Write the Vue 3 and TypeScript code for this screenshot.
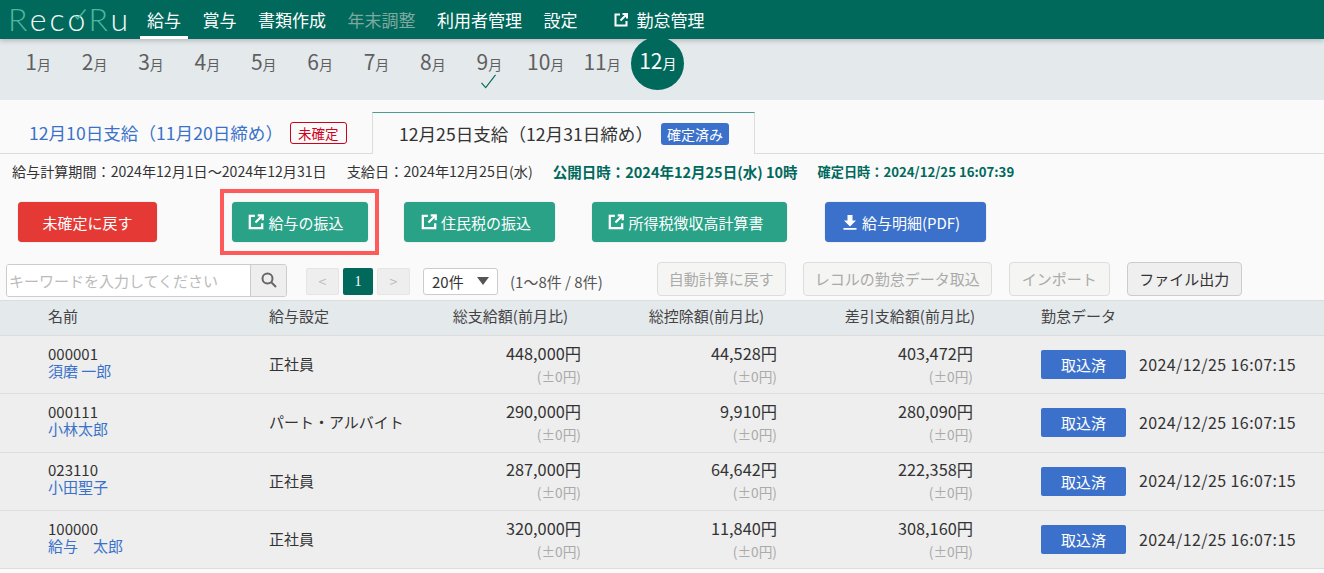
<script setup lang="ts">
interface Employee {
  code: string
  name: string
  type: string
  total: string
  deduct: string
  net: string
}

const navItems = [
  { label: '給与', active: true },
  { label: '賞与' },
  { label: '書類作成' },
  { label: '年末調整', disabled: true },
  { label: '利用者管理' },
  { label: '設定' },
]

const months = [1, 2, 3, 4, 5, 6, 7, 8, 9, 10, 11, 12]

const employees: Employee[] = [
  { code: '000001', name: '須磨 一郎', type: '正社員', total: '448,000', deduct: '44,528', net: '403,472' },
  { code: '000111', name: '小林太郎', type: 'パート・アルバイト', total: '290,000', deduct: '9,910', net: '280,090' },
  { code: '023110', name: '小田聖子', type: '正社員', total: '287,000', deduct: '64,642', net: '222,358' },
  { code: '100000', name: '給与　太郎', type: '正社員', total: '320,000', deduct: '11,840', net: '308,160' },
]
</script>

<template>
  <div class="page">
    <!-- header -->
    <header class="topbar">
      <div class="logo">
        <span class="logo_r">R</span>ec<span class="logo_o">o<svg class="logo_check" viewBox="0 0 18 18"><path d="M2 10L6 14L16 2" /></svg></span><span class="logo_r">R</span>u
      </div>
      <nav class="nav">
        <a
          v-for="item in navItems"
          :key="item.label"
          class="nav_item"
          :class="{ active: item.active, disabled: item.disabled }"
        >{{ item.label }}</a>
      </nav>
      <a class="nav_item nav_ext">
        <svg class="ext_icon" viewBox="0 0 16 16">
          <path d="M7 2.500H2.500v11h11V9M9.500 2h4.500v4.500M14 2L7.500 8.500" />
        </svg>
        勤怠管理
      </a>
    </header>

    <!-- months -->
    <div class="months">
      <div v-for="m in months" :key="m" class="month" :class="{ current: m === 12 }">
        <span class="month_label"><b>{{ m }}</b><small>月</small></span>
        <svg v-if="m === 9" class="check" viewBox="0 0 18 16">
          <path d="M1.500 9.500L6 14.500L16.500 1" />
        </svg>
      </div>
    </div>

    <!-- tabs -->
    <div class="tabs">
      <div class="tab">
        <a class="tab_link">12月10日支給（11月20日締め）</a>
        <span class="badge_red">未確定</span>
      </div>
      <div class="tab tab_active">
        <span>12月25日支給（12月31日締め）</span>
        <span class="badge_blue">確定済み</span>
      </div>
    </div>

    <div class="period">
      <span class="calc_term">給与計算期間：2024年12月1日〜2024年12月31日</span>
      <span class="pay_day">支給日：2024年12月25日(水)</span>
      <b class="open_at">公開日時：2024年12月25日(水) 10時</b>
      <b class="fixed_at">確定日時：2024/12/25 16:07:39</b>
    </div>

    <!-- actions -->
    <div class="actions">
      <button class="btn btn_red btn_undo">未確定に戻す</button>
      <div class="highlight">
        <button class="btn btn_green btn_pay">
          <svg class="ext_icon" viewBox="0 0 16 16">
            <path d="M7 2.500H2.500v11h11V9M9.500 2h4.500v4.500M14 2L7.500 8.500" />
          </svg>
          給与の振込
        </button>
      </div>
      <button class="btn btn_green btn_tax">
        <svg class="ext_icon" viewBox="0 0 16 16">
          <path d="M7 2.500H2.500v11h11V9M9.500 2h4.500v4.500M14 2L7.500 8.500" />
        </svg>
        住民税の振込
      </button>
      <button class="btn btn_green btn_slip">
        <svg class="ext_icon" viewBox="0 0 16 16">
          <path d="M7 2.500H2.500v11h11V9M9.500 2h4.500v4.500M14 2L7.500 8.500" />
        </svg>
        所得税徴収高計算書
      </button>
      <button class="btn btn_blue btn_pdf">
        <svg class="dl_icon" viewBox="0 0 14 16">
          <path d="M4.500 1h5v5.500H13L7 12.500L1 6.500h3.500zM0.500 14h13v1.800H0.500z" />
        </svg>
        給与明細(PDF)
      </button>
    </div>

    <!-- toolbar -->
    <div class="toolbar">
      <div class="search">
        <input class="search_input" type="text" placeholder="キーワードを入力してください" />
        <span class="search_btn">
          <svg viewBox="0 0 18 18" width="18" height="18">
            <circle cx="7.500" cy="7.500" r="5" />
            <path d="M11.500 11.500L16 16" />
          </svg>
        </span>
      </div>
      <div class="pager">
        <span class="page_btn">&lt;</span>
        <span class="page_btn page_now">1</span>
        <span class="page_btn">&gt;</span>
      </div>
      <div class="per_page">20件<i class="caret"></i></div>
      <span class="count">(1〜8件 / 8件)</span>
      <div class="tools">
        <button class="tool tool_off tool_auto">自動計算に戻す</button>
        <button class="tool tool_off tool_import">レコルの勤怠データ取込</button>
        <button class="tool tool_off tool_in">インポート</button>
        <button class="tool tool_out">ファイル出力</button>
      </div>
    </div>

    <!-- table -->
    <div class="table">
      <div class="row row_head">
        <div class="c_name">名前</div>
        <div class="c_type">給与設定</div>
        <div class="c_num">総支給額(前月比)</div>
        <div class="c_num">総控除額(前月比)</div>
        <div class="c_num c_net">差引支給額(前月比)</div>
        <div class="c_att">勤怠データ</div>
      </div>
      <div v-for="e in employees" :key="e.code" class="row">
        <div class="c_name">
          <div class="code">{{ e.code }}</div>
          <a class="emp_name">{{ e.name }}</a>
        </div>
        <div class="c_type">{{ e.type }}</div>
        <div class="c_val">
          <div class="amount">{{ e.total }}円</div>
          <div class="diff">(±0円)</div>
        </div>
        <div class="c_val">
          <div class="amount">{{ e.deduct }}円</div>
          <div class="diff">(±0円)</div>
        </div>
        <div class="c_val c_net">
          <div class="amount">{{ e.net }}円</div>
          <div class="diff">(±0円)</div>
        </div>
        <div class="c_att">
          <button class="btn_done">取込済</button>
          <span class="stamp">2024/12/25 16:07:15</span>
        </div>
      </div>
    </div>
  </div>
</template>

<style>
html,
body {
  margin: 0;
  background: #fafafa;
}
</style>

<style scoped>
.page {
  width: 1324px;
  height: 573px;
  overflow: hidden;
  background: #fafafa;
  color: #333;
  font-family: "Noto Sans CJK JP", "Noto Sans", sans-serif;
  font-size: 15px;
}

/* header */
.topbar {
  position: relative;
  z-index: 1;
  display: flex;
  align-items: stretch;
  height: 39px;
  padding-left: 8px;
  background: #00695c;
  box-shadow: 0 2px 5px rgba(0, 0, 0, 0.2);
  box-sizing: border-box;
}
.logo {
  width: 132px;
  font-family: Lato, sans-serif;
  font-weight: 300;
  font-size: 32px;
  line-height: 38px;
  letter-spacing: 3.200px;
  color: #f2f7f5;
  white-space: nowrap;
}
.logo_r {
  color: #4fb8a0;
}
.logo_o {
  position: relative;
}
.logo_check {
  position: absolute;
  top: 9px;
  left: 5px;
  width: 14px;
  height: 14px;
  fill: none;
  stroke: #4fb8a0;
  stroke-width: 1.800;
}
.nav {
  display: flex;
  gap: 7.500px;
}
.nav_item {
  display: flex;
  align-items: center;
  padding: 0 7px;
  color: #fff;
  font-size: 17px;
  white-space: nowrap;
}
.nav_item.active {
  border-bottom: 3px solid #fff;
  padding-top: 3px;
}
.nav_item.disabled {
  color: #7fa89f;
}
.nav_ext {
  gap: 8px;
  margin-left: 21px;
}
.ext_icon {
  width: 18px;
  height: 18px;
  flex: none;
  fill: none;
  stroke: currentColor;
  stroke-width: 2;
}
.nav_ext .ext_icon {
  width: 16px;
  height: 16px;
}

/* months */
.months {
  display: grid;
  grid-template-columns: repeat(12, 56.400px);
  height: 61px;
  padding-left: 10px;
  background: #e4e9ec;
}
.month {
  position: relative;
  display: flex;
  justify-content: center;
  height: 45px;
  padding-top: 7px;
  color: #5f5f5f;
}
.month_label {
  line-height: 30px;
}
.month b {
  font-weight: 400;
  font-size: 21px;
}
.month small {
  font-size: 14px;
}
.month.current {
  z-index: 2;
  width: 53px;
  height: 53px;
  margin: -2px 0 0 1px;
  padding-top: 8px;
  box-sizing: border-box;
  border-radius: 50%;
  background: #00695c;
  color: #fff;
}
.check {
  position: absolute;
  top: 35px;
  left: 19px;
  width: 17px;
  height: 15px;
  fill: none;
  stroke: #00695c;
  stroke-width: 1.200;
}

/* tabs */
.tabs {
  display: flex;
  align-items: flex-end;
  height: 54px;
  border-bottom: 1px solid #ddd;
  box-sizing: border-box;
  padding-left: 29px;
}
.tab {
  display: flex;
  align-items: center;
  gap: 7px;
  width: 343px;
  height: 41px;
  font-size: 17.600px;
  white-space: nowrap;
}
.tab_link {
  color: #3a72c9;
}
.badge_red {
  padding: 0 7px;
  border: 1px solid #d0021b;
  border-radius: 3px;
  color: #d0021b;
  font-size: 13.500px;
  line-height: 20px;
}
.tab_active {
  gap: 8px;
  width: 383px;
  height: 42px;
  margin-bottom: -1px;
  padding-left: 26px;
  box-sizing: border-box;
  border: 1px solid #ddd;
  border-top: 1px solid #4f9d8e;
  border-bottom: 0;
  background: #fafafa;
}
.badge_blue {
  padding: 0 6px;
  border-radius: 3px;
  background: #3b71ca;
  color: #fff;
  font-size: 14px;
  line-height: 22px;
}

.period {
  display: flex;
  gap: 20px;
  height: 35px;
  padding-left: 12px;
  line-height: 35px;
  white-space: nowrap;
}
.calc_term {
  font-size: 14.100px;
}
.pay_day {
  font-size: 14.200px;
}
.period b {
  color: #00695c;
  font-weight: 700;
}
.period .open_at {
  font-size: 14.500px;
}
.period .fixed_at {
  font-size: 13.200px;
}

/* actions */
.actions {
  display: flex;
  align-items: center;
  height: 66px;
  margin-bottom: 8px;
  padding-left: 18px;
}
.btn {
  display: flex;
  align-items: center;
  justify-content: center;
  gap: 3px;
  height: 40px;
  padding: 0 8px 0 0;
  border: 0;
  border-radius: 4px;
  color: #fff;
  font: inherit;
  box-shadow: 0 0 1px rgba(0, 0, 0, 0.4);
}
.btn_red {
  background: #e53935;
}
.btn_green {
  background: #2aa287;
}
.btn_blue {
  background: #3b71ca;
}
.btn_undo {
  width: 139px;
  margin-right: 63px;
  padding: 0;
}
.highlight {
  padding: 9px 7.500px;
  border: 4px solid #ff5a5a;
  margin-right: 25px;
}
.btn_pay {
  width: 136px;
}
.btn_tax {
  width: 151px;
  margin-right: 37px;
}
.btn_slip {
  width: 195px;
  margin-right: 38px;
}
.btn_pdf {
  width: 161px;
}
.dl_icon {
  width: 14px;
  height: 16px;
  margin-right: 2px;
  fill: #fff;
}

/* toolbar */
.toolbar {
  display: flex;
  align-items: center;
  height: 36px;
  padding-left: 6px;
}
.search {
  display: flex;
  width: 281px;
  height: 33px;
  margin-bottom: 2px;
  box-sizing: border-box;
  border: 1px solid #ccc;
  border-radius: 3px;
  overflow: hidden;
}
.search_input {
  flex: 1;
  min-width: 0;
  padding: 0 2px;
  border: 0;
  outline: 0;
  font: inherit;
  background: #fff;
}
.search_input::placeholder {
  color: #bbb;
}
.search_btn {
  display: flex;
  align-items: center;
  justify-content: center;
  width: 35px;
  border-left: 1px solid #ccc;
  background: #eee;
}
.search_btn svg {
  fill: none;
  stroke: #666;
  stroke-width: 2;
}
.pager {
  display: flex;
  gap: 4px;
  margin-left: 19px;
}
.page_btn {
  width: 33px;
  height: 27px;
  box-sizing: border-box;
  border: 1px solid #e5e5e5;
  border-radius: 2px;
  background: #eee;
  color: #bbb;
  font-size: 14px;
  text-align: center;
  line-height: 24px;
}
.page_now {
  width: 30px;
  border: 0;
  background: #00695c;
  color: #fff;
  line-height: 27px;
  font-family: "Liberation Serif", serif;
}
.per_page {
  display: flex;
  align-items: center;
  justify-content: space-between;
  width: 75px;
  height: 27px;
  margin-left: 13px;
  padding: 0 8px;
  box-sizing: border-box;
  border: 1px solid #ccc;
  border-radius: 3px;
  background: #fff;
}
.caret {
  border-left: 6px solid transparent;
  border-right: 6px solid transparent;
  border-top: 8px solid #555;
}
.count {
  margin-left: 12px;
  color: #555;
}
.tools {
  display: flex;
  gap: 17px;
  margin-left: 54px;
  margin-bottom: 5px;
}
.tool {
  height: 34px;
  padding: 0;
  border: 1px solid #ddd;
  border-radius: 4px;
  background: #f5f5f3;
  font: inherit;
  color: #333;
}
.tool_off {
  color: #aaa;
}
.tool_auto {
  width: 129px;
}
.tool_import {
  width: 189px;
}
.tool_in {
  width: 101px;
}
.tool_out {
  width: 115px;
  background: #efefef;
  border-color: #ccc;
}

/* table */
.table {
  margin-top: 1px;
  border-top: 1px solid #ddd;
}
.row {
  display: grid;
  grid-template-columns: 269px 120px 192px 196px 198px 1fr;
  align-items: center;
  height: 58.300px;
  padding-bottom: 2px;
  box-sizing: border-box;
  border-bottom: 1px solid #ddd;
  background: #eee;
}
.row_head {
  height: 35px;
  padding-bottom: 5px;
  background: #e4e9ec;
  color: #444;
}
.c_name {
  padding-left: 48px;
}
.c_type {
  white-space: nowrap;
}
.c_num {
  padding-right: 13px;
  text-align: right;
}
.c_num.c_net {
  padding-right: 0;
}
.c_val {
  text-align: right;
}
.c_val.c_net {
  padding-right: 2px;
}
.amount {
  font-size: 16.300px;
  line-height: 22px;
}
.diff {
  margin-top: 2px;
  color: #aaa;
  font-size: 13.700px;
  line-height: 20px;
}
.code {
  line-height: 17px;
}
.emp_name {
  display: block;
  margin-bottom: 4px;
  color: #3a72c9;
  line-height: 17px;
}
.c_att {
  display: flex;
  align-items: center;
  gap: 13px;
  padding-left: 66px;
}
.btn_done {
  width: 85px;
  height: 29px;
  margin-top: 2px;
  padding: 0;
  border: 0;
  border-radius: 2px;
  background: #3b71ca;
  color: #fff;
  font: inherit;
}
.stamp {
  white-space: nowrap;
  font-size: 16px;
  letter-spacing: 0.400px;
}
</style>
